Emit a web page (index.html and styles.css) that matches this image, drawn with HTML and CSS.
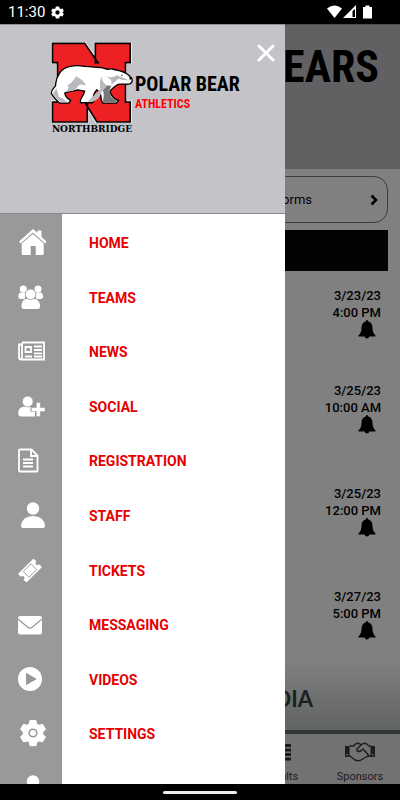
FILE: index.html
```html
<!DOCTYPE html>
<html lang="en">
<head>
<meta charset="utf-8">
<meta name="viewport" content="width=device-width, initial-scale=1">
<title>Polar Bear Athletics</title>
<link rel="stylesheet" href="styles.css">
</head>
<body>
<div class="status">
  <span class="clock">11:30</span>
  <svg class="status-gear" viewBox="0 0 24 24"><path fill="#fff" fill-rule="evenodd" d="M9 1h6l.8 3.3 2 1.2L21 4.6l2.7 4.8-2.4 2.2v.8l2.4 2.2-2.7 4.8-3.2-.9-2 1.2L15 23H9l-.8-3.3-2-1.2-3.2.9-2.7-4.8 2.4-2.2v-.8L.3 9.4 3 4.6l3.2.9 2-1.2zM12 8a4 4 0 1 0 0 8 4 4 0 0 0 0-8z"/></svg>
  <svg class="status-right" viewBox="0 0 46 14"><g fill="#fff"><path d="M0 3.500Q7.500-2.500 15 3.500L7.500 13z"/><path fill-rule="evenodd" d="M29 0V13H16zM25.500 6v6H28V4z"/><path d="M36 2h2.500V.500h4V2H45v11.500h-9z"/></g></svg>
</div>

<div class="app">
  <main class="page">
    <header class="banner"><span class="banner-title">BEARS</span></header>
    <div class="content">
      <button class="forms" type="button">
        <span>Forms</span>
        <svg class="chevron" viewBox="0 0 8 12"><path d="M1.500 1.500L6 6l-4.500 4.500" fill="none" stroke="#000" stroke-width="2.500"/></svg>
      </button>
      <div class="strip"></div>
      <ul class="events">
        <li class="event"><span>3/23/23</span><span>4:00 PM</span><svg class="bell" viewBox="0 0 18 19"><use href="#bell"/></svg></li>
        <li class="event"><span>3/25/23</span><span>10:00 AM</span><svg class="bell" viewBox="0 0 18 19"><use href="#bell"/></svg></li>
        <li class="event"><span>3/25/23</span><span>12:00 PM</span><svg class="bell" viewBox="0 0 18 19"><use href="#bell"/></svg></li>
        <li class="event"><span>3/27/23</span><span>5:00 PM</span><svg class="bell" viewBox="0 0 18 19"><use href="#bell"/></svg></li>
      </ul>
    </div>
    <div class="media">MEDIA</div>
    <nav class="tabs">
      <a class="tab tab-results" href="#results">
        <svg class="tab-icon" viewBox="0 0 30 20"><path fill="#1c1c1c" d="M4 2h3v3H4zM9 2h17v3H9zM4 6.500h3v3H4zM9 6.500h17v3H9zM4 11h3v3H4zM9 11h17v3H9zM4 15.500h3v3H4zM9 15.500h17v3H9z"/></svg>
        <span>Results</span>
      </a>
      <a class="tab" href="#sponsors">
        <svg class="tab-icon" viewBox="0 0 30 20"><g fill="none" stroke="#1c1c1c" stroke-width="1.400" stroke-linejoin="round" stroke-linecap="round"><path d="M5 4h3.500L11 1.500h3.500L16 3l2-1.500h3L24 4h2M5 14l5 4q2.500 1 5 .500l8-4.500h3"/><path d="M16 3l-4 4q-.500 2.500 1.500 2.500 2.500 0 4.500-2.500l5 5.500q1 1-.500 2"/></g><path fill="#1c1c1c" fill-rule="evenodd" d="M0 4h4.500v11H0zm1.500 8v1.500h1.500V12zM25.500 4H30v11h-4.500zm1.500 8v1.500h1.500V12z"/></svg>
        <span>Sponsors</span>
      </a>
    </nav>
  </main>

  <aside class="drawer">
    <div class="drawer-head">
      <div class="brand">
        <div class="crest">
          <svg class="crest-art" viewBox="30 36 252 244">
            <path d="M37 40H134L166 87V40H271V98H257V217H271V277H171L142 230V277H37V217H52V98H37z" fill="#ed2024" stroke="#fff" stroke-width="9"/>
            <path d="M37 40H134L174 98H166V40H271V98H257V217H271V277H171L134 217H142V277H37V217H52V98H37z" fill="#ed2024" stroke="#000" stroke-width="5"/>
            <path d="M34 192C31 184 38 178 46 168 48 156 46 148 56 134 66 114 92 104 122 108 145 111 166 112 184 113 192 114 198 119 206 118 214 114 222 119 232 121 248 124 260 130 270 139 280 146 279 158 270 162 258 166 246 160 234 164 224 170 214 176 210 186 214 198 222 208 236 212L230 220H190C180 214 186 202 180 188L170 180C162 190 156 202 164 210L158 219H122C116 209 130 202 134 184L112 180C94 186 80 186 74 190 76 204 84 207 92 212L86 220H58C48 211 42 204 34 192z" fill="#fff" stroke="#000" stroke-width="4" stroke-linejoin="round"/>
            <path d="M184 169C196 165 210 168 215 168 206 180 208 190 216 204L232 213 228 217H192C184 209 200 202 184 169z" fill="#77777c"/>
            <path d="M108 139Q130 150 138 166L119 164 102 182 74 187Q92 174 82 166 98 158 108 139zM143 217Q163 193 181 178 177 160 184 139 187 160 202 168L184 187Q181 207 158 216zM232 136L246 142 266 151Q248 153 236 147L214 165Q220 147 196 139 216 147 232 136zM38 191L49 175 56 200 83 216H61Q48 207 38 191z" fill="#b9b9be"/>
            <circle cx="246" cy="136" r="2"/><path d="M268 140l7 6-5 5z"/>
          </svg>
          <span class="crest-name">NORTHBRIDGE</span>
        </div>
        <div class="brand-text">
          <span class="brand-main">POLAR BEAR</span>
          <span class="brand-sub">ATHLETICS</span>
        </div>
      </div>
      <button class="close" type="button" aria-label="Close menu"><svg class="close-icon" viewBox="0 0 18 18"><path d="M2 2l14 14M16 2L2 16" stroke="#fff" stroke-width="3" stroke-linecap="round"/></svg></button>
    </div>
    <nav class="menu">
      <ul class="menu-list">
        <li><a class="item" href="#home"><svg class="icon" viewBox="0 0 28 28"><path fill="#fff" d="M19.500 4V1.500h4V8L28.500 12.500 27 14.500 15 3.500 2.500 14.500 1 12.500 15 0z"/><path fill="#fff" d="M15 5L25.700 14.500V25q0 1-1 1H17.700V17h-5v9H4.700q-1 0-1-1V14.500z"/></svg><span class="label">HOME</span></a></li>
        <li><a class="item" href="#teams"><svg class="icon" viewBox="0 0 28 28"><g fill="#fff"><circle cx="5.300" cy="5" r="3.500"/><circle cx="20" cy="5" r="3.500"/><path d="M3 8.500Q0 8.500.300 13 .300 15 3 15H6.500Q8 13 7.500 8.500zM22 8.500Q25.300 8.500 25 13 25 15 22 15H18.500Q17 13 17.500 8.500z"/><path d="M8 15Q3.500 16 3.500 22.500 3.500 25 6 25H19.500Q22 25 22 22.500 22 16 17 15z"/></g><circle cx="12.600" cy="10.300" r="5.300" fill="#fff" stroke="#999" stroke-width=".800"/></svg><span class="label">TEAMS</span></a></li>
        <li><a class="item" href="#news"><svg class="icon" viewBox="0 0 28 28"><g fill="none" stroke="#fff" stroke-width="1.800"><path d="M4 4.500H26V21.500H3Q1 21.500 1 19.500V6.500H4M4 5V19Q4 21 2.500 21"/><path d="M7.500 9H13V14H7.500zM16 8.500h8M16 12h8M16 15.300h8M16 18.500h8M7 18.500h7"/></g></svg><span class="label">NEWS</span></a></li>
        <li><a class="item" href="#social"><svg class="icon" viewBox="0 0 28 28"><g fill="#fff"><path d="M6 13.500Q.300 14 .300 20.500.300 23.500 3 23.500H17V18.500H12.500V14z"/><circle cx="9.700" cy="8.500" r="5.400" stroke="#999" stroke-width=".700"/><path d="M18.300 9.500h4v5H27v4h-4.700v5h-4v-5h-5v-4h5z" stroke="#999" stroke-width=".500"/></g></svg><span class="label">SOCIAL</span></a></li>
        <li><a class="item" href="#registration"><svg class="icon" viewBox="0 0 28 28"><g fill="none" stroke="#fff" stroke-width="1.800"><path d="M1 3.500Q1 2.500 2 2.500H13.500L19.500 8.500V23.500Q19.500 24.500 18.500 24.500H2Q1 24.500 1 23.500zM13 2.500V9H19.500"/><path d="M5 12.500H15M5 16H15M5 19.500H15"/></g></svg><span class="label">REGISTRATION</span></a></li>
        <li><a class="item" href="#staff"><svg class="icon" viewBox="0 0 28 28"><use href="#person"/></svg><span class="label">STAFF</span></a></li>
        <li><a class="item" href="#tickets"><svg class="icon" viewBox="0 0 28 28"><g transform="rotate(-45 12 13.500)"><path fill="#fff" d="M2 7.500H22Q23 7.500 23 8.500V11.500Q20.500 11.500 20.500 13.500T23 15.500V18.500Q23 19.500 22 19.500H2Q1 19.500 1 18.500V15.500Q3.500 15.500 3.500 13.500T1 11.500V8.500Q1 7.500 2 7.500z"/><path fill="none" stroke="#999" stroke-width=".900" d="M6.500 9.500H17.500V17.500H6.500z"/></g></svg><span class="label">TICKETS</span></a></li>
        <li><a class="item" href="#messaging"><svg class="icon" viewBox="0 0 28 28"><rect y="5" width="24" height="18.500" rx="2" fill="#fff"/><path d="M0 8L9.500 16Q12 18.500 14.500 16L24 8" fill="none" stroke="#999" stroke-width="1.200"/></svg><span class="label">MESSAGING</span></a></li>
        <li><a class="item" href="#videos"><svg class="icon" viewBox="0 0 28 28"><circle cx="12" cy="13" r="12" fill="#fff"/><path d="M8.500 7.500L18 13 8.500 18.500z" fill="#999" stroke="#999" stroke-linejoin="round"/></svg><span class="label">VIDEOS</span></a></li>
        <li><a class="item" href="#settings"><svg class="icon" viewBox="0 0 28 28"><path fill="#fff" stroke="#fff" stroke-linejoin="round" d="M12 .500h6l.700 3.500 2.300 1.300 3.500-1 3 5-2.700 2.500v2.600l2.700 2.500-3 5-3.500-1-2.300 1.300L18 25.700h-6l-.700-3.500L9 20.900l-3.500 1-3-5 2.700-2.500v-2.600L2.500 9.300l3-5 3.500 1L11.300 4z"/><circle cx="15" cy="13" r="3.800" fill="#fff" stroke="#999" stroke-width="1.600"/></svg><span class="label">SETTINGS</span></a></li>
        <li><a class="item" href="#account"><svg class="icon" viewBox="0 0 28 28"><use href="#person"/></svg></a></li>
      </ul>
    </nav>
  </aside>
</div>

<div class="gesture"><span class="pill"></span></div>

<svg width="0" height="0" class="defs">
  <defs>
    <g id="bell"><path d="M9 0Q10.300 0 10.300 1.500 14.500 2.500 14.500 8 14.500 13 17.500 15.500V16.500H.500V15.500Q3.500 13 3.500 8 3.500 2.500 7.700 1.500 7.700 0 9 0zM6.500 16H11.500Q11 18.500 9 18.500T6.500 16z"/></g>
    <g id="person" fill="#fff"><circle cx="15" cy="6.500" r="6.200"/><path d="M3 24Q4 14 15 14T27 24Q27 26 25 26H5Q3 26 3 24z"/></g>
  </defs>
</svg>
</body>
</html>
```
FILE: styles.css
```css
* { box-sizing: border-box; }

body {
  margin: 0;
  height: 100vh;
  display: flex;
  flex-direction: column;
  overflow: hidden;
  background: #000;
  font-family: Roboto, "Liberation Sans", sans-serif;
}

ul { list-style: none; margin: 0; padding: 0; }
a { color: inherit; text-decoration: none; }
button { font: inherit; color: inherit; cursor: pointer; }
svg { display: block; flex: none; }
.defs { position: absolute; }

/* system bars */
.status {
  flex: none;
  height: 24px;
  display: flex;
  align-items: center;
  padding: 0 27px 0 8px;
  color: #fff;
}
.clock { font-size: 15px; line-height: 24px; }
.status-gear { width: 13px; height: 13px; margin-left: 6px; }
.status-right { width: 46px; height: 14px; margin-left: auto; }

.gesture {
  flex: none;
  height: 16px;
  display: flex;
  align-items: center;
  justify-content: center;
}
.pill { width: 74px; height: 3px; border-radius: 2px; background: #eee; }

/* dimmed page */
.app { flex: 1; min-height: 0; position: relative; overflow: hidden; }
.page {
  height: 100%;
  display: flex;
  flex-direction: column;
  background: #808080;
  color: #000;
}
.banner {
  height: 145px;
  flex: none;
  display: flex;
  justify-content: flex-end;
  padding: 18px 21px 0 0;
  background: #616163;
  border-top: 1px solid #4c4c4e;
}
.banner-title {
  font: bold 44px/48px "Liberation Sans Narrow", "Roboto Condensed", "Liberation Sans", sans-serif;
  white-space: nowrap;
}
.content { flex: 1; min-height: 0; padding: 7px 12px 0; }
.forms {
  width: 100%;
  height: 47px;
  display: flex;
  align-items: center;
  justify-content: flex-end;
  gap: 58px;
  padding: 0 9px;
  border: 1px solid #3c3c3c;
  border-radius: 14px;
  background: none;
  font-size: 13px;
}
.chevron { width: 8px; height: 12px; }
.strip { height: 41px; margin-top: 7px; background: #020403; }
.events { padding: 16px 7px 0; }
.event {
  height: 103px;
  display: flex;
  flex-direction: column;
  align-items: flex-end;
  font-size: 13px;
  line-height: 17px;
  font-weight: 500;
}
.event:first-child { height: 95px; }
.bell { width: 18px; height: 19px; margin: -1px 5px 0 0; }
.media {
  flex: none;
  height: 74px;
  padding: 24px 87px 0 0;
  text-align: right;
  font: bold 22px/30px Lato, sans-serif;
  color: #1a211f;
  background: linear-gradient(#808080, #606462);
  border-bottom: 4px solid #303634;
}
.tabs {
  flex: none;
  height: 50px;
  display: grid;
  grid-template-columns: repeat(5, 1fr);
  background: #727272;
  color: #1c1c1c;
}
.tab {
  display: flex;
  flex-direction: column;
  align-items: center;
  padding-top: 8px;
  font-size: 11px;
  line-height: 14px;
  gap: 8px;
}
.tab-results { grid-column: 4; }
.tab-icon { width: 30px; height: 20px; }

/* menu drawer over the page */
.drawer {
  position: absolute;
  inset: 0 auto 0 0;
  width: 71.25%;
  display: flex;
  flex-direction: column;
  overflow: hidden;
  background: #fff;
}
.drawer-head {
  flex: none;
  height: 190px;
  display: flex;
  justify-content: space-between;
  align-items: flex-start;
  padding: 17px 10px 0 50px;
  background: #c4c3c8;
  border-top: 1px solid #929196;
  border-bottom: 1px solid #88878a;
}
.brand { display: flex; gap: 1px; }
.crest { width: 84px; }
.crest-art { width: 84px; height: 81px; }
.crest-name {
  display: block;
  font: bold 9px/12px "DejaVu Serif", serif;
  text-align: center;
  color: #000;
}
.brand-text {
  display: flex;
  flex-direction: column;
  padding-top: 30px;
  font-family: "Liberation Sans Narrow", "Roboto Condensed", "Liberation Sans", sans-serif;
  font-weight: bold;
  white-space: nowrap;
}
.brand-main { font-size: 20px; line-height: 24px; color: #000; }
.brand-sub { font-size: 12px; line-height: 16px; color: #f00; }
.close { padding: 2px 0 0; border: 0; background: none; }
.close-icon { width: 18px; height: 18px; }

.menu {
  flex: 1;
  min-height: 0;
  overflow: hidden;
  background: linear-gradient(to right, #999 62px, #fff 62px);
}
.menu-list {
  height: 602px;
  padding-top: 2px;
  display: grid;
  grid-auto-rows: 1fr;
}
.item {
  height: 100%;
  display: flex;
  align-items: center;
  gap: 43px;
  padding-left: 18px;
}
.icon { width: 28px; height: 28px; overflow: visible; }
.label { font-size: 14px; font-weight: 700; color: #e60000; }
```
